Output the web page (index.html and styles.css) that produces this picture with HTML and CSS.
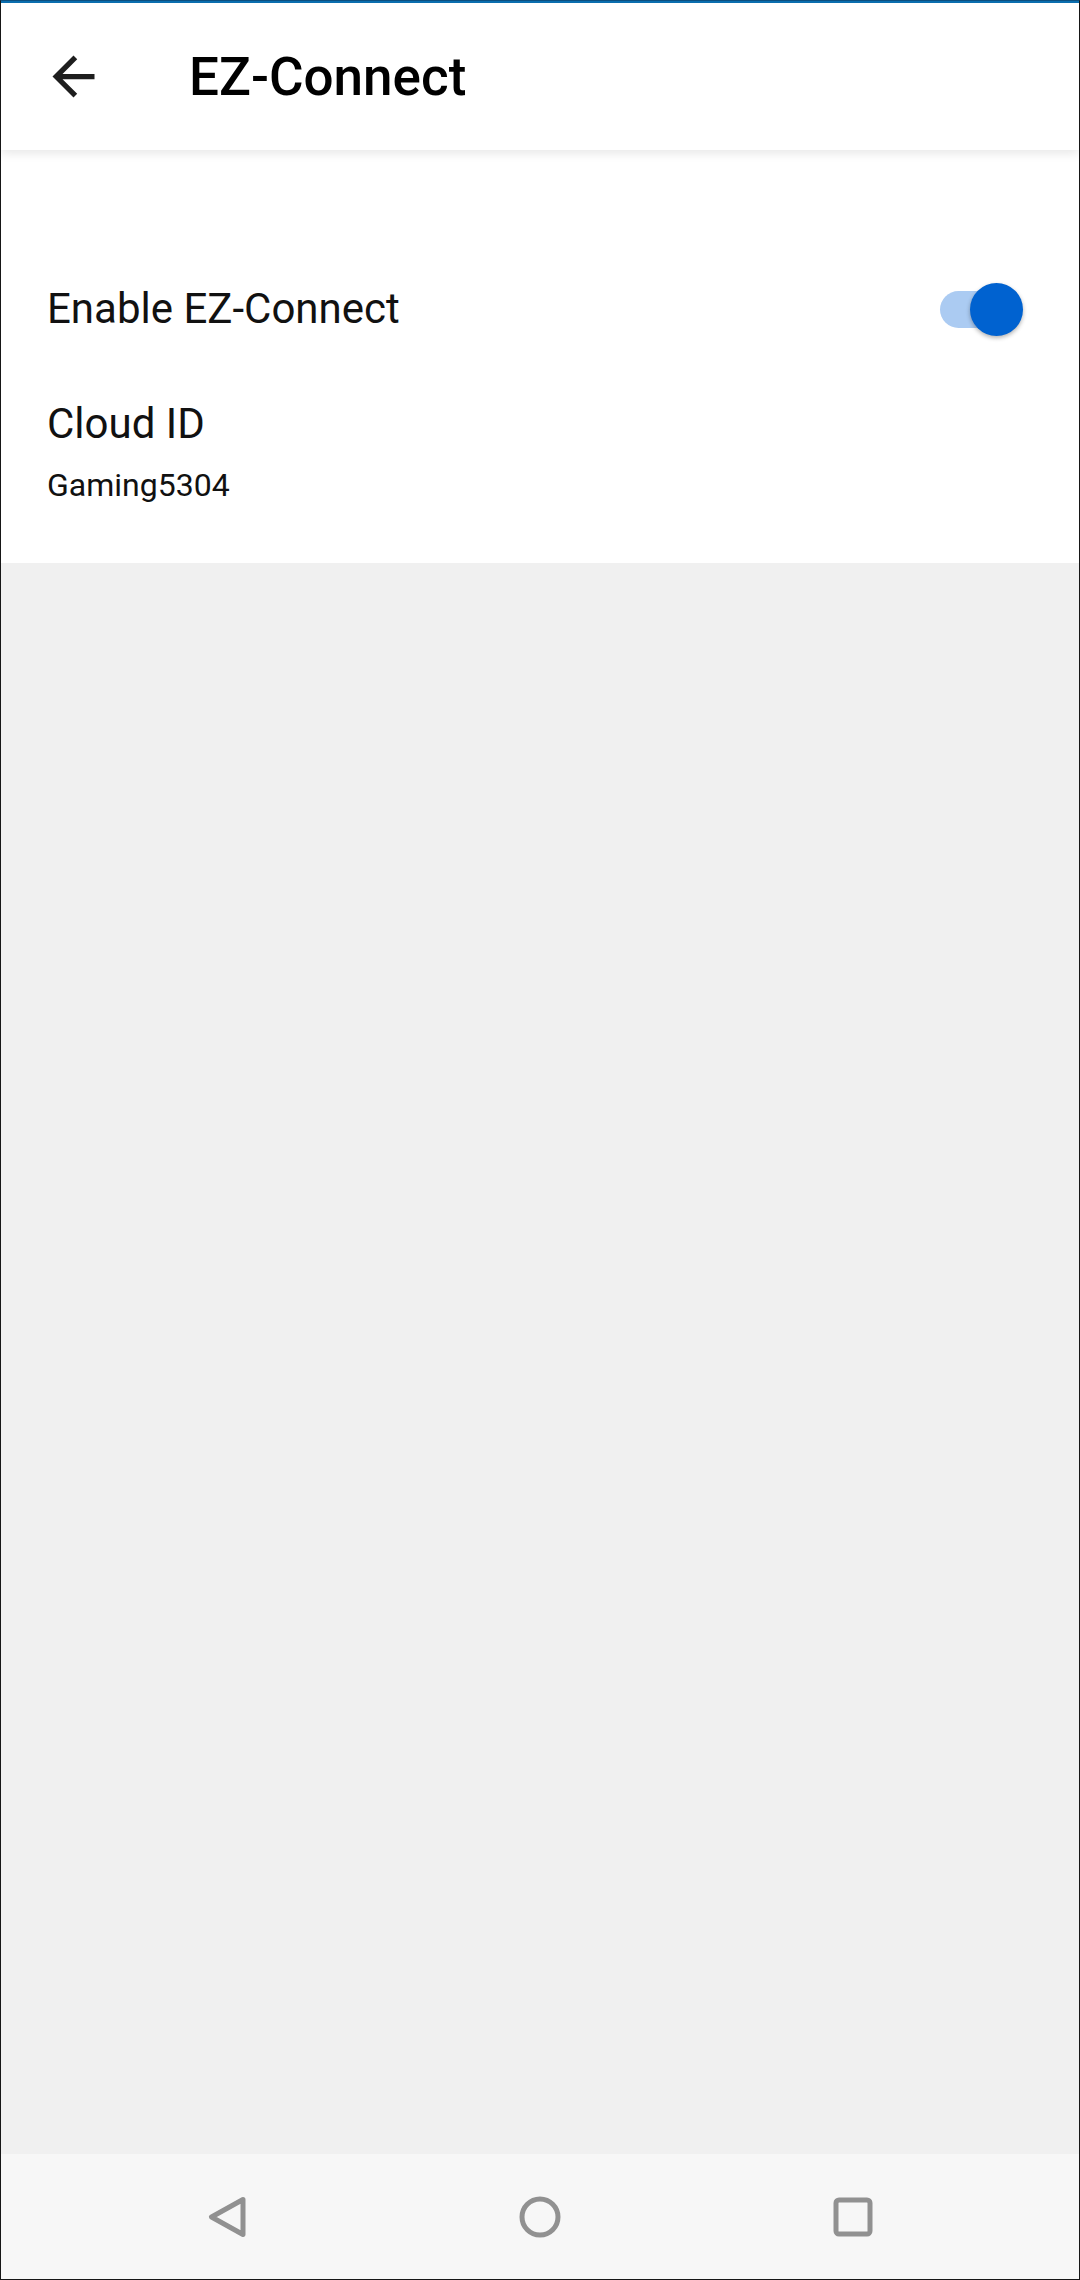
FILE: index.html
```html
<!DOCTYPE html>
<html lang="en">
<head>
  <meta charset="UTF-8">
  <meta name="viewport" content="width=device-width, initial-scale=1.0">
  <title>EZ-Connect</title>
  <link rel="stylesheet" href="styles.css">
</head>
<body>
  <div class="screen">
    <div class="status-line"></div>
    <header class="toolbar">
      <button class="back-btn" aria-label="Back">
        <svg width="63" height="63" viewBox="0 0 24 24">
          <path d="M20 11H7.83l5.59-5.59L12 4l-8 8 8 8 1.41-1.41L7.83 13H20v-2z" fill="#1e1e1e"/>
        </svg>
      </button>
      <h1>EZ-Connect</h1>
    </header>

    <div class="settings">
      <div class="setting-row">
        <span class="setting-label">Enable EZ-Connect</span>
        <div class="switch on">
          <div class="switch-track"></div>
          <div class="switch-thumb"></div>
        </div>
      </div>
      <div class="setting-item">
        <div class="setting-label">Cloud ID</div>
        <div class="setting-value">Gaming5304</div>
      </div>
    </div>

    <div class="filler"></div>

    <nav class="nav-bar">
      <svg width="48" height="48" viewBox="0 0 48 48">
        <path d="M40 6.5 L8.5 24 L40 41.5 Z" fill="none" stroke="#919191" stroke-width="5" stroke-linejoin="round"/>
      </svg>
      <svg width="48" height="48" viewBox="0 0 48 48">
        <circle cx="24" cy="24" r="18" fill="none" stroke="#919191" stroke-width="5"/>
      </svg>
      <svg width="48" height="48" viewBox="0 0 48 48">
        <rect x="7" y="7" width="34" height="34" rx="3" fill="none" stroke="#919191" stroke-width="5"/>
      </svg>
    </nav>
  </div>
</body>
</html>
```

FILE: styles.css
```css
html, body {
  margin: 0;
  padding: 0;
}
body {
  font-family: Roboto, "Noto Sans", Arial, sans-serif;
  background: #fff;
}
.screen {
  width: 1080px;
  height: 2280px;
  box-sizing: border-box;
  border: 1px solid #161616;
  border-top-color: #0b4f80;
  display: flex;
  flex-direction: column;
  overflow: hidden;
}
.status-line {
  height: 2px;
  background: #0b71b3;
}
.toolbar {
  height: 147px;
  background: #fff;
  display: flex;
  align-items: center;
  position: relative;
  z-index: 2;
  box-shadow: 0 3px 10px rgba(0, 0, 0, 0.1);
}
.back-btn {
  border: none;
  background: none;
  padding: 0;
  margin-left: 41px;
  width: 63px;
  height: 63px;
  display: flex;
}
.toolbar h1 {
  margin: 0 0 0 84px;
  font-size: 53px;
  font-weight: 500;
  color: #000;
  line-height: 64px;
}
.settings {
  background: #fff;
  padding: 131px 56px 58px 46px;
}
.setting-row {
  display: flex;
  align-items: center;
  justify-content: space-between;
  height: 56px;
}
.setting-label {
  font-size: 42px;
  line-height: 56px;
  color: #111;
}
.setting-item {
  margin-top: 59px;
}
.setting-value {
  margin-top: 13px;
  font-size: 32px;
  line-height: 40px;
  color: #111;
}
.switch {
  position: relative;
  width: 83px;
  height: 53px;
}
.switch-track {
  position: absolute;
  left: 0;
  top: 8px;
  width: 80px;
  height: 37px;
  border-radius: 19px;
  background: #abcbf2;
}
.switch-thumb {
  position: absolute;
  right: 0;
  top: 0;
  width: 53px;
  height: 53px;
  border-radius: 50%;
  background: #0062d0;
  box-shadow: 0 2px 4px rgba(0, 0, 0, 0.3);
}
.filler {
  flex: 1;
  background: #f0f0f0;
}
.nav-bar {
  height: 125px;
  background: #f7f7f7;
  display: flex;
  align-items: center;
  justify-content: center;
  gap: 265px;
}
```
